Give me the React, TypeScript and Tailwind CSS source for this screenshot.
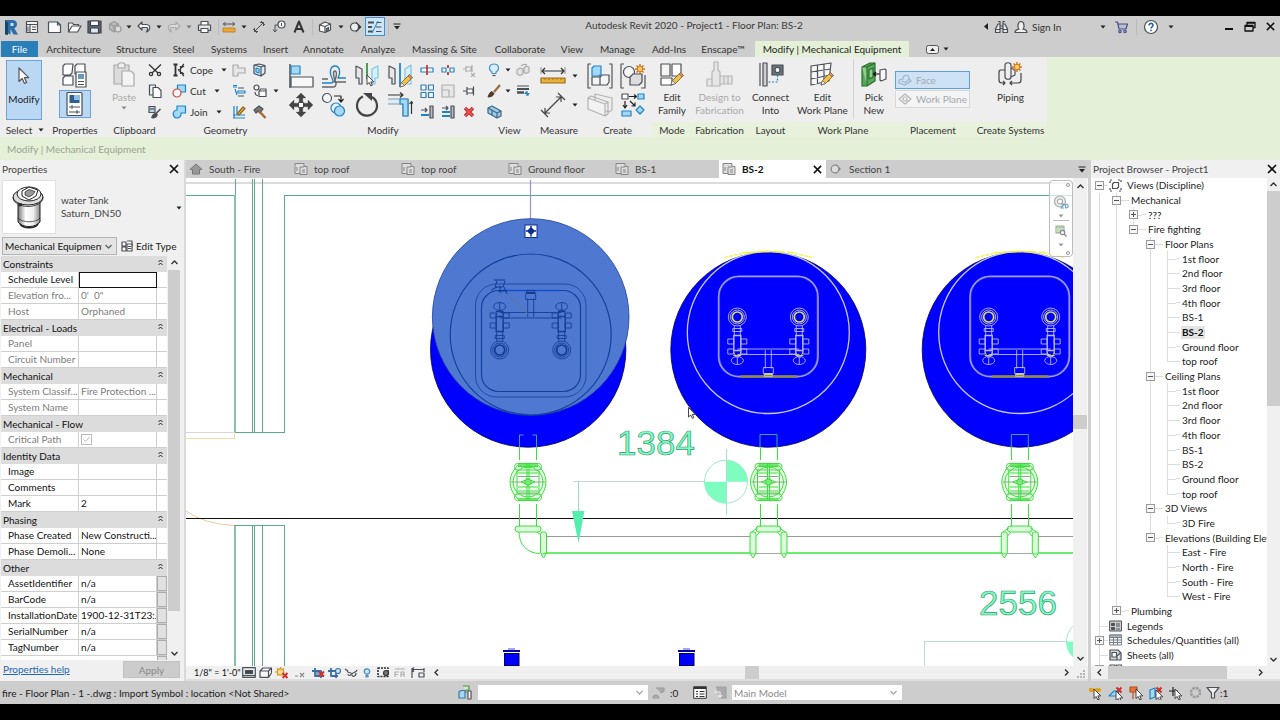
import React, { ReactNode } from "react";

/* ---------- icon helpers ---------- */

const INK = "#4a5058";
const BLUE = "#1e84c6";
const SKY = "#a5d8f6";

type IcoProps = { w?: number; h?: number; s?: string; sw?: number; children: ReactNode };
function Ico({ w = 16, h = 16, s = INK, sw = 1.2, children }: IcoProps) {
  return (
    <svg width={w} height={h} viewBox={`0 0 ${w} ${h}`} fill="none" stroke={s} strokeWidth={sw} strokeLinejoin="round" className="block shrink-0" aria-hidden="true">
      {children}
    </svg>
  );
}

function Caret({ c = "#222" }: { c?: string }) {
  return (
    <svg width="6" height="4" viewBox="0 0 6 4" className="block shrink-0" aria-hidden="true">
      <path d="M.5 .5h5L3 3.5z" fill={c} />
    </svg>
  );
}

function Chevron({ d = "down", c = "#333" }: { d?: "up" | "down" | "left" | "right"; c?: string }) {
  const p = { up: "M1.5 6l3-3 3 3", down: "M1.5 3l3 3 3-3", left: "M6 1.5l-3 3 3 3", right: "M3 1.5l3 3-3 3" }[d];
  return (
    <svg width="9" height="9" viewBox="0 0 9 9" fill="none" stroke={c} strokeWidth="1.4" className="block shrink-0" aria-hidden="true">
      <path d={p} />
    </svg>
  );
}

function Cross({ n = 10 }: { n?: number }) {
  return (
    <svg width={n} height={n} viewBox="0 0 10 10" stroke="#111" strokeWidth="1.7" className="block shrink-0" aria-hidden="true">
      <path d="M1 1l8 8M9 1l-8 8" />
    </svg>
  );
}

const pencil = (
  <g>
    <path d="M13 24l1.500-4.500 8-8 3 3-8 8z" fill="#f2c14b" stroke="#8a6420" strokeWidth=".9" />
    <path d="M13 24l1.500-4.500 3 3z" fill="#fff" stroke="#555" strokeWidth=".7" />
    <path d="M21 13l3 3 1.500-1.500-3-3z" fill="#d98b7a" stroke="#8a6420" strokeWidth=".7" />
  </g>
);

const spark = (x: number, y: number) => (
  <g transform={`translate(${x} ${y})`}>
    <path d="M0-5v10M-5 0h10M-3.500-3.500l7 7M-3.500 3.500l7-7" stroke="#c96f14" strokeWidth="1.400" />
    <circle r="2.600" fill="#ffd76a" stroke="#d9761a" strokeWidth="1" />
  </g>
);

const redX = (x: number, y: number) => (
  <path transform={`translate(${x} ${y})`} d="M-2.500-2.500l5 5M2.500-2.500l-5 5" stroke="#cf2f2a" strokeWidth="2" />
);

const arrowCursor = (x: number, y: number) => (
  <path transform={`translate(${x} ${y})`} d="M0 0v9.500l2.200-2 1.600 3.400 1.500-.700-1.500-3.300h3z" fill="#fff" stroke="#333" strokeWidth=".9" />
);

/* ---------- title bar ---------- */

function Slot({ label, className = "w-5", children }: { label: string; className?: string; children: ReactNode }) {
  return (
    <button type="button" aria-label={label} className={`flex h-5 shrink-0 items-center justify-center ${className}`}>
      {children}
    </button>
  );
}
const Sep = () => <span className="h-4 w-px shrink-0 bg-[#bcbcbc]" />;

function TitleBar() {
  return (
    <header className="flex h-[25px] shrink-0 items-center bg-[#cdcdcd] pb-1">
      <div className="flex w-[408px] shrink-0 items-center">
        <Slot label="Application menu" className="w-[22px]">
          <svg width="14" height="16" viewBox="0 0 14 16" aria-hidden="true">
            <path d="M1 1h7c3.500 0 5 1.700 5 4.300 0 2-1 3.300-2.700 4L14 15.500H9.500L6.500 10v5.500L3 14V4.500L1 3z" fill="#2a6fa8" />
            <path d="M6.500 4h1.700c1 0 1.500.500 1.500 1.400S9.200 7 8.200 7H6.500z" fill="#cfe0ee" />
            <path d="M1 1v14.500l3 .500V4z" fill="#16466f" />
          </svg>
        </Slot>
        <Slot label="Home">
          <Ico w={14} h={14}><rect x="1.500" y="1.500" width="11" height="11" fill="#f2f2f2" /><path d="M1.500 4.500h11M5 4.500v8M7 7h4M7 9.500h4" /><path d="M3 6.500v5" strokeWidth="1" /></Ico>
        </Slot>
        <span className="w-0.5" />
        <Slot label="New"><Ico w={15} h={14}><path d="M1.500 2h9l3 3v7.500h-12z" fill="#fafafa" /><path d="M10.500 2v3h3" /></Ico></Slot>
        <Slot label="Open"><Ico w={15} h={14}><path d="M1.500 12V3h4l1 1.500h5V6" fill="#f4f4f4" /><path d="M1.500 12L5 6h9l-3.500 6z" fill="#fff" /></Ico></Slot>
        <Slot label="Save"><Ico w={15} h={14} s="#3c434c"><rect x="1" y="1" width="13" height="12" fill="#5b6470" /><path d="M3.500 1h8v4.500h-8z" fill="#fff" /><path d="M3.500 8h8v5h-8z" fill="#dfe8ef" /></Ico></Slot>
        <Slot label="Synchronize" className="w-[21px]"><Ico w={14} h={14} s="#9b9b9b"><path d="M1.500 4L6 1.500 10.500 4v5L6 12 1.500 9z" fill="#bbb" /><path d="M1.500 4L6 6l4.500-2M6 6v6" /><circle cx="10" cy="9" r="3" fill="#ddd" /></Ico></Slot>
        <Slot label="Synchronize options" className="w-2"><Caret /></Slot>
        <Slot label="Undo" className="w-[22px]"><Ico w={14} h={12}><path d="M5 1L1 5l4 4V6.500h4.500c1.500 0 1.500 2 0 4.500 4-2 4.500-7 0-7.500H5z" fill="#f5f5f5" /></Ico></Slot>
        <Slot label="Undo options" className="w-2"><Caret /></Slot>
        <Slot label="Redo" className="w-[22px]"><Ico w={14} h={12} s="#ababab"><path d="M9 1l4 4-4 4V6.500H4.500C3 6.500 3 8.500 4.500 11 .500 9 0 4 4.500 3.500H9z" fill="#d8d8d8" /></Ico></Slot>
        <Slot label="Redo options" className="w-2"><Caret c="#777" /></Slot>
        <Slot label="Print" className="w-[22px]"><Ico w={15} h={14}><path d="M4 5V1.500h7V5" fill="#fff" /><path d="M1.500 5h12v5.500h-12z" fill="#e9e9e9" /><path d="M4 8.500h7v4H4z" fill="#fff" /></Ico></Slot>
        <span className="w-[3px]" />
        <Sep />
        <Slot label="Measure"><Ico w={14} h={12}><path d="M1 3h12M3.500 1L1.500 3l2 2M10.500 1l2 2-2 2" strokeWidth="1" /><rect x="1" y="7" width="12" height="4" fill="#e8a93a" stroke="#b9791b" strokeWidth=".8" /></Ico></Slot>
        <Slot label="Measure options" className="w-[10px]"><Caret /></Slot>
        <Slot label="Aligned dimension"><Ico w={14} h={14}><path d="M2.500 11.500l9-9M8 2.500h3.500V6M2.500 8v3.500H6M1 9l4 4M9 1l4 4" strokeWidth="1" /></Ico></Slot>
        <Slot label="Tag by category"><Ico w={14} h={14}><circle cx="9.500" cy="4.500" r="3.500" fill="#f5f5f5" /><path d="M9.500 3v3M6 5H3v6M1 9.500L3 12l2-2.500" strokeWidth="1" /></Ico></Slot>
        <Slot label="Text"><Ico w={12} h={14} sw={2} s="#333"><path d="M1.500 12.500L6 1.500l4.500 11M3 9h6" /></Ico></Slot>
        <span className="w-[3px]" />
        <Sep />
        <Slot label="Default 3D view" className="w-6"><Ico w={14} h={14}><path d="M1.500 5L7 2l5.500 2v6L7 12.500 1.500 11z" fill="#fff" /><path d="M1.500 5L7 6.500l5.500-2.500M7 6.500v6" /><path d="M8.500 8.500l2-1v3l-2 1z" fill="#888" /></Ico></Slot>
        <Slot label="3D options" className="w-2"><Caret /></Slot>
        <Slot label="Section" className="w-5"><Ico w={14} h={14}><path d="M8 1.500L13.500 7 8 12.500z" fill="#333" stroke="none" /><circle cx="6.500" cy="7" r="4" fill="#eee" /></Ico></Slot>
        <span className="flex h-[19px] w-5 shrink-0 items-center justify-center border border-[#3f8fd2] bg-[#cfe5f8]">
          <Ico w={16} h={14} sw={1.500}><path d="M1 2.500h6M1 7h4M1 11.500h5" strokeWidth="2.200" /><path d="M9.500 2.500h5M9 7h5.500M9 11.500h5.500" strokeWidth="1" /><path d="M5 13L11 1" stroke={BLUE} strokeWidth="1" /></Ico>
        </span>
        <span className="w-[3px]" />
        <Sep />
        <Slot label="Customize toolbar" className="w-4"><svg width="8" height="7" viewBox="0 0 8 7" aria-hidden="true"><path d="M.500 1h7" stroke="#222" /><path d="M1 3h6L4 6.500z" fill="#222" /></svg></Slot>
      </div>
      <h1 className="min-w-0 flex-1 truncate pb-1 text-center leading-4 text-[#3a3a3a]">Autodesk Revit 2020 - Project1 - Floor Plan: BS-2</h1>
      <div className="flex w-[300px] shrink-0 items-center">
        <Slot label="Collapse search" className="w-[12px]"><svg width="4" height="7" viewBox="0 0 4 7"><path d="M4 0v7L0 3.500z" fill="#222" /></svg></Slot>
        <Slot label="Search" className="w-[18px]"><Ico w={15} h={14}><path d="M4 1.500h2V4M9 4V1.500h2M6 4L4 4 1.500 9v3.500H6V4zM9 4h2l2.500 5v3.500H9zM6 6h3M6 8.500h3" fill="#e8e8e8" /><path d="M2 9.500h4M9 9.500h4" /></Ico></Slot>
        <Slot label="Account" className="w-[22px]"><Ico w={14} h={14}><path d="M1 12.500c0-2 2-3 4-3.300C3.500 8 3.300 1.500 7 1.500S10.500 8 9 9.200c2 .300 4 1.300 4 3.300z" fill="#eee" /></Ico></Slot>
        <button type="button" className="w-[66px] text-left leading-4 text-[#333]">Sign In</button>
        <Slot label="Account options" className="w-[14px]"><Caret /></Slot>
        <Slot label="App store" className="w-6"><Ico w={15} h={14} s="#46508a"><path d="M1 2h2.500L5 9h7l1.500-5H4" fill="#b8bcd4" /><circle cx="6" cy="11.500" r="1.200" /><circle cx="11" cy="11.500" r="1.200" /></Ico></Slot>
        <span className="w-0.5" />
        <Sep />
        <Slot label="Help" className="w-[28px]"><Ico w={16} h={16}><circle cx="8" cy="8" r="6.500" fill="#fff" /><path d="M6 6.500c0-3 4.300-2.700 4 0-.200 1.400-2 1.500-2 3M8 10.700v1.500" stroke="#2b5fae" strokeWidth="1.600" /></Ico></Slot>
        <Slot label="Help options" className="w-3"><Caret /></Slot>
        <span className="w-[45px]" />
        <Slot label="Minimize" className="w-[18px]"><svg width="8" height="8"><rect y="5" width="8" height="2" fill="#111" /></svg></Slot>
        <Slot label="Restore" className="w-6"><Ico w={12} h={11} s="#111" sw={1.300}><path d="M3 4V1.500h8v5H9M3 2.200h8M1 4.500h8v5.500H1zM1 5.300h8" /></Ico></Slot>
        <Slot label="Close" className="w-[18px]"><Cross n={9} /></Slot>
      </div>
    </header>
  );
}

/* ---------- ribbon tabs ---------- */

const tabs: [string, string][] = [
  ["Architecture", "w-[71px]"], ["Structure", "w-[55px]"], ["Steel", "w-[39px]"], ["Systems", "w-[52px]"],
  ["Insert", "w-[41px]"], ["Annotate", "w-[55px]"], ["Analyze", "w-[54px]"], ["Massing & Site", "w-[79px]"],
  ["Collaborate", "w-[72px]"], ["View", "w-[32px]"], ["Manage", "w-[59px]"], ["Add-Ins", "w-[44px]"], ["Enscape™", "w-[64px]"],
];

function RibbonTabs() {
  return (
    <nav className="flex h-4 shrink-0 bg-[#cdcdcd] pl-px leading-4 text-[#333]">
      <button type="button" className="w-[37px] bg-[#2a7fb8] text-white">File</button>
      {tabs.map(([t, w]) => (
        <button type="button" key={t} className={`${w} shrink-0 whitespace-nowrap`}>{t}</button>
      ))}
      <button type="button" className="w-[154px] shrink-0 whitespace-nowrap bg-[#e5f0d9] text-[#222]">Modify | Mechanical Equipment</button>
      <button type="button" aria-label="Ribbon display" className="flex w-[56px] items-center justify-center gap-1">
        <svg width="13" height="9" viewBox="0 0 13 9"><rect x=".5" y=".5" width="12" height="8" rx="2" fill="#eee" stroke="#555" /><path d="M4 6l2.500-3L9 6z" fill="#222" /></svg>
        <Caret />
      </button>
    </nav>
  );
}

/* ---------- ribbon ---------- */

function Panel({ title, className, green, caret, children }: { title: string; className: string; green?: boolean; caret?: boolean; children: ReactNode }) {
  return (
    <section className={`flex shrink-0 flex-col bg-[#eeeeee] ${className}`}>
      <div className="flex h-[65px] pt-0.5">{children}</div>
      <h2 className={`flex h-[15px] items-center justify-center gap-1.5 whitespace-nowrap leading-4 text-[#333] ${green ? "bg-[#e7f1dc]" : ""}`}>
        {title}
        {caret && <Caret />}
      </h2>
    </section>
  );
}

function Tool({ label, className = "w-[21px] h-[21px]", children }: { label: string; className?: string; children: ReactNode }) {
  return (
    <button type="button" aria-label={label} className={`flex shrink-0 items-center justify-center ${className}`}>{children}</button>
  );
}

function BigTool({ lines, className, dim, children }: { lines: string[]; className: string; dim?: boolean; children: ReactNode }) {
  return (
    <button type="button" className={`flex flex-col items-center pt-0.5 leading-[13px] ${dim ? "text-[#a9a9a9]" : "text-[#333]"} ${className}`}>
      {children}
      <span className="mt-0.5 flex flex-col items-center whitespace-nowrap">
        {lines.map((l) => <span key={l}>{l}</span>)}
      </span>
    </button>
  );
}

const big = "w-[33px] h-[29px]";

function Ribbon() {
  return (
    <div className="flex h-20 shrink-0 bg-[#e5f0d9] shadow-[0_1px_0_#d3dccb]">
      <Panel title="Select" caret className="w-[50px]">
        <button type="button" className="ml-1.5 mt-px flex h-[60px] w-9 flex-col items-center border border-[#6fa3d3] bg-[#bad8f4] leading-4 text-[#222]">
          <span className="mt-1.5"><Ico w={14} h={18}><path d="M2 1v13.500l3.200-3 2.300 5 2.200-1-2.300-4.800h4.300z" fill="#fff" stroke="#555" /></Ico></span>
          <span className="mt-1.5">Modify</span>
        </button>
      </Panel>
      <Panel title="Properties" className="w-[50px]">
        <div className="flex w-full flex-col items-center gap-0.5 pt-0.5">
          <Tool label="Type properties" className="h-[27px] w-8">
            <Ico w={28} h={26}>
              <path d="M2 4l2-2h8l-1 9-2 2H2zM14 4l2-2h8v8l-2 2h-8zM2 16l2-2h8v9H2z" fill="#fdfdfd" />
              <rect x="15" y="10" width="10" height="15" fill="#fff" /><rect x="17" y="12" width="6" height="5" fill="#6b96bd" stroke="none" /><path d="M17 19.500h6M17 22.500h6" />
            </Ico>
          </Tool>
          <Tool label="Properties" className="h-7 w-8 border border-[#6fa3d3] bg-[#bad8f4]">
            <Ico w={20} h={26}>
              <rect x="2" y="1.500" width="15" height="23" rx="1" fill="#fff" /><rect x="4.500" y="4" width="10" height="8" fill="#2d5f8c" stroke="none" /><path d="M9 4h5.500v5H9z" fill="#8fc1e8" stroke="none" />
              <path d="M4 16h11M7 14v4M4 21h11M12 19v4" strokeWidth="1" />
            </Ico>
          </Tool>
        </div>
      </Panel>
      <Panel title="Clipboard" className="w-[69px]">
        <button type="button" className="flex w-[48px] flex-col items-center gap-px pt-0.5 leading-4 text-[#a9a9a9]">
          <Ico w={24} h={27} s="#a9a9a9"><rect x="2" y="4" width="15" height="19" fill="#dcdcdc" /><path d="M6 4c0-3 7-3 7 0v3H6z" fill="#eee" /><path d="M10 10h9l3 3v12H10z" fill="#f4f4f4" /></Ico>
          Paste
          <Caret c="#888" />
        </button>
        <div className="-ml-1 flex flex-col">
          <Tool label="Cut"><Ico w={14} h={14} sw={1.300} s="#333"><path d="M1 1.500l9 8.500M13 1.500L4 10" /><circle cx="3" cy="11" r="1.600" /><circle cx="11" cy="11" r="1.600" /></Ico></Tool>
          <Tool label="Copy"><Ico w={14} h={14}><path d="M1.500 1h6v10h-6z" fill="#f0f0f0" /><path d="M5 3.500h5l3 3v7H5z" fill="#fff" /></Ico></Tool>
          <Tool label="Match type"><Ico w={14} h={14}><path d="M1 1.500h6v6H1z" fill="#bcd3e6" /><path d="M2 4h4" /><path d="M12.500 4L8 8.500M4 12.500c1-3 3-4 4-4s1.500 2 0 3-3 1.200-4 1z" fill="#444" strokeWidth="1.600" /></Ico></Tool>
        </div>
      </Panel>
      <Panel title="Geometry" className="w-[113px]">
        <div className="flex w-[59px] flex-col leading-4 text-[#333]">
          <button type="button" className="flex h-[21px] items-center"><span className="w-[21px] pl-[3px]"><Ico w={15} h={14} s="#333"><path d="M1.500 1.500h4M1.500 12.500h4M3.500 1.500v11" strokeWidth="1.800" /><path d="M6 7l6-4M6 7l6 4M8.500 3v8M12 1c-2 1-1 3-3 3M12 13c-2-1-1-3-3-3" /></Ico></span><span className="mr-2">Cope</span><Caret /></button>
          <button type="button" className="flex h-[21px] items-center"><span className="w-[21px] pl-[3px]"><Ico w={15} h={14} s={BLUE}><rect x="5.500" y="1" width="8" height="7" fill={SKY} /><circle cx="5" cy="9" r="4" fill="#f4f4f4" stroke="#c94a42" /></Ico></span><span className="mr-2">Cut</span><Caret /></button>
          <button type="button" className="flex h-[21px] items-center"><span className="w-[21px] pl-[3px]"><Ico w={15} h={14} s={BLUE}><path d="M5 1h8.500v7H9a4 4 0 1 1-4-3z" fill={SKY} /></Ico></span><span className="mr-2">Join</span><Caret /></button>
        </div>
        <div className="flex flex-col">
          <Tool label="Beam joins"><Ico w={14} h={14} s="#aaa"><path d="M1 2h5v3h7v5H6v3H1z" fill="#e6e6e6" /></Ico></Tool>
          <Tool label="Wall joins"><Ico w={14} h={14}><path d="M1 3h4M1 1.500h4M6 7h7v2H6zM3 5l2 6" stroke={BLUE} /><path d="M6 4h6M6 12h6" /></Ico></Tool>
          <Tool label="Split face"><Ico w={14} h={14}><path d="M2 1v12M5 1v8M1 10h12M1 13h12" stroke={BLUE} /><path d="M5 9l6-7 2 1.500L7 10z" fill="#f2c14b" stroke="#8a6420" /></Ico></Tool>
        </div>
        <div className="flex flex-col">
          <Tool label="Paint"><Ico w={14} h={14}><path d="M1 2l7 2v9L1 10.500zM8 4l4-1.500V10L8 13zM1 2l5-1 6 1.500" fill="#dfeefa" /><path d="M3 5l3 1v4L3 9z" fill={SKY} stroke={BLUE} /></Ico></Tool>
          <Tool label="Wall opening"><Ico w={14} h={14}><circle cx="3.500" cy="3.500" r="2.500" /><path d="M6 7h7v5.500H6zM6 7l1.500-2H13v2M2 8c0 3 1 3.500 3 3.500" fill="#fff" /></Ico></Tool>
          <Tool label="Demolish"><Ico w={14} h={14}><path d="M1 5l5-4 4 3-3 4-2-2-2 2z" fill="#777" /><path d="M6 6l6.500 7" stroke="#a66a3a" strokeWidth="2.500" /></Ico></Tool>
        </div>
        <Tool label="Geometry options" className="mt-[21px] h-[21px] w-3"><Caret /></Tool>
      </Panel>
      <Panel title="Modify" className="w-[202px]">
        <div className="ml-0.5 grid grid-cols-4 content-start gap-y-0 pt-0.5">
          <Tool label="Align" className={big}><Ico w={26} h={26}><path d="M2 1v24" strokeWidth="1.500" /><rect x="3" y="3" width="9" height="8" fill={SKY} stroke={BLUE} /><rect x="3" y="14" width="22" height="10" fill="#f8f8f8" /></Ico></Tool>
          <Tool label="Offset" className={big}><Ico w={26} h={26} sw={1.400}><path d="M1 20h9c3 0 2-3 1-5-3-5-2-12 3-12s6 7 3 12h8" stroke={BLUE} /><path d="M1 24h11c3 0 4-3 2-7-2-5-2-9 0-9s2 6-1 11h12M1 16h6" stroke="#666" /></Ico></Tool>
          <Tool label="Mirror pick axis" className={big}><Ico w={26} h={26}><path d="M2 3l6 3v15H5v-6H2z" fill="#e8e8e8" /><path d="M24 3l-6 3v15h3v-6h3z" fill="#d5effb" stroke="#7cc3e4" /><path d="M13 0v16" stroke="#2f9b3a" strokeWidth="1.800" />{arrowCursor(13, 12)}</Ico></Tool>
          <Tool label="Mirror draw axis" className={big}><Ico w={26} h={26}><path d="M2 3l6 3v15H5v-6H2z" fill="#e8e8e8" /><path d="M24 2l-6 4v15h6z" fill="#d5effb" stroke="#7cc3e4" /><path d="M13 0v24" stroke={BLUE} strokeWidth="1.800" />{pencil}</Ico></Tool>
          <Tool label="Move" className={big}><Ico w={26} h={26} s="#444"><path d="M13 1l5 5h-3.200v4h-3.600V6H8zM13 25l5-5h-3.200v-4h-3.600v4H8zM1 13l5-5v3.200h4v3.600H6V18zM25 13l-5-5v3.200h-4v3.600h4V18z" fill="#444" strokeWidth=".3" /><rect x="10.500" y="10.500" width="5" height="5" fill="#fff" strokeWidth="1" /></Ico></Tool>
          <Tool label="Copy element" className={big}><Ico w={26} h={26}><circle cx="6" cy="6" r="4.500" fill="#f6f6f6" /><path d="M13 4h7v5M17.500 7L20 10l2.500-3" stroke="#222" /><circle cx="15" cy="16" r="5" fill="#e8f5fd" stroke={BLUE} /><circle cx="18.500" cy="19" r="5" fill={SKY} stroke={BLUE} /></Ico></Tool>
          <Tool label="Rotate" className={big}><Ico w={26} h={26} s="#444" sw={2.200}><path d="M9 4.500a10 10 0 1 0 9 .500" /><path d="M9 1h9v8z" fill="#444" stroke="none" /></Ico></Tool>
          <Tool label="Trim corner" className={big}><Ico w={26} h={26}><path d="M1 7h20v17h-5V12H1" fill="#d9eefb" stroke="#8d959c" /><path d="M13 7h8v17h-5V12h-3z" fill={SKY} stroke={BLUE} /><path d="M1 3h15M13 .500l3 2.500-3 2.500M24.500 22V10M22.500 12l2-2.500 2 2.500" stroke="#333" /></Ico></Tool>
        </div>
        <div className="grid grid-cols-3 content-start">
          <Tool label="Split"><Ico w={14} h={12}><rect x="1" y="4" width="12" height="4" fill="#fff" stroke={BLUE} /><path d="M7 1v10" stroke="#c8372f" strokeWidth="1.800" /></Ico></Tool>
          <Tool label="Split with gap"><Ico w={14} h={12}><path d="M1 4h4v4H1zM9 4h4v4H9z" fill="#fff" stroke={BLUE} /><path d="M7 1v3M7 8v3" stroke="#c8372f" strokeWidth="1.800" /></Ico></Tool>
          <Tool label="Unpin"><Ico w={14} h={14} s="#b0b0b0"><path d="M1 6h3M4 3v6M4 4h5v4H4M10 2v7M9 10l4 4M13 10l-4 4" /></Ico></Tool>
          <Tool label="Array"><Ico w={14} h={14} s={BLUE}><path d="M1 1h5v5H1zM8.500 1h5v5h-5zM1 8.500h5v5H1zM8.500 8.500h5v5h-5z" fill="#eaf6fd" stroke="#3c79a6" /></Ico></Tool>
          <Tool label="Scale"><Ico w={14} h={14} s="#b0b0b0"><path d="M1 1h12v12H1zM1 6h7v7" fill="#e8e8e8" /></Ico></Tool>
          <Tool label="Pin"><Ico w={14} h={12}><path d="M1 6h4M5 2v8M5 4h6v4H5M11.500 1.500v9" fill="#fff" /></Ico></Tool>
          <Tool label="Trim single"><Ico w={14} h={14}><path d="M1 5h6M5 3l2 2-2 2" /><path d="M1 10h8" stroke={BLUE} strokeWidth="2" /><path d="M10 1h3v12h-3z" fill="#bbb" /></Ico></Tool>
          <Tool label="Trim multiple"><Ico w={14} h={14}><path d="M1 3h6M5 1l2 2-2 2" /><path d="M1 7h8M1 11h8" stroke={BLUE} strokeWidth="2" /><path d="M10 1h3v12h-3z" fill="#bbb" /></Ico></Tool>
          <Tool label="Delete"><Ico w={12} h={12}><path d="M2 2l8 8M10 2l-8 8" stroke="#c1272d" strokeWidth="3.400" /><path d="M2 2l8 8M10 2l-8 8" stroke="#ee5a56" strokeWidth="1.400" /></Ico></Tool>
        </div>
      </Panel>
      <Panel title="View" className="w-[51px]">
        <div className="grid grid-cols-[20px_8px_22px] content-start">
          <Tool label="Reveal" className="h-[21px] w-5"><Ico w={12} h={14}><path d="M4 9C-.500 6 1.500 1 6 1s6.500 5 2 8v1.500H4z" fill="#d8effd" stroke="#4f90c0" /><path d="M4.500 12.500h3" /></Ico></Tool>
          <Tool label="Reveal options" className="h-[21px] w-2"><Caret /></Tool>
          <Tool label="Displace"><Ico w={14} h={14} s="#adadad"><path d="M1 7l3-2 3 1v5l-3 1.500L1 11zM8 5l2-2 3 1v5l-3 1.500L8 9z" fill="#e2e2e2" /><path d="M5 3c2-2 4-2 6-1" /></Ico></Tool>
          <Tool label="Override graphics" className="h-[21px] w-5"><Ico w={14} h={14}><path d="M13 1L7 8" stroke="#9a6a3a" strokeWidth="2.200" /><path d="M1 13c1-3 2-5 4-5.500l2 2C6.500 12 4 13 1 13z" fill="#5a3a22" stroke="#3c2a1a" strokeWidth=".8" /></Ico></Tool>
          <Tool label="Override options" className="h-[21px] w-2"><Caret /></Tool>
          <Tool label="Linework"><Ico w={14} h={12}><path d="M1 1h12" strokeWidth="1" /><path d="M1 4h12" strokeWidth="2" /><path d="M1 7.500h7" strokeWidth="2.500" /><path d="M11 6v5M8.500 8.500h5M9.200 6.800l3.600 3.600" stroke={BLUE} /></Ico></Tool>
          <Tool label="Selection box" className="h-[21px] w-5"><Ico w={15} h={14}><path d="M1 3l4-2 9 5v5l-4 2-9-5z" fill="#9ccbe8" stroke="#3d6886" /><path d="M1 3l9 5v5M10 8l4-2M5 5v5" stroke="#3d6886" /></Ico></Tool>
        </div>
      </Panel>
      <Panel title="Measure" className="w-[48px]">
        <div className="grid grid-cols-[36px_8px] content-start pt-0.5">
          <Tool label="Measure distance" className="h-[29px] w-9"><Ico w={26} h={22}><path d="M2 6h22M5 3L2 6l3 3M21 3l3 3-3 3" stroke="#333" /><path d="M1 2v7M25 2v7" strokeWidth=".6" /><rect x="1" y="13" width="24" height="5" fill="#e9b03c" stroke="#9a6c1c" /><path d="M5 13v2M9 13v2M13 13v2M17 13v2M21 13v2" stroke="#9a6c1c" strokeWidth=".8" /></Ico></Tool>
          <Tool label="Measure distance options" className="h-[29px] w-2"><Caret /></Tool>
          <Tool label="Dimension" className="h-[29px] w-9"><Ico w={26} h={26}><path d="M5 21L21 5M16 5h5v5M5 16v5h5M1 18l7 7M18 1l7 7" stroke="#444" /></Ico></Tool>
          <Tool label="Dimension options" className="h-[29px] w-2"><Caret /></Tool>
        </div>
      </Panel>
      <Panel title="Create" className="w-[69px]">
        <div className="grid grid-cols-2 content-start pt-0.5">
          <Tool label="Create parts" className={big}><Ico w={26} h={26}><path d="M4 1H1v24h3M22 1h3v24h-3" stroke="#555" /><path d="M5 5l2-2h7v8l-2 2H5z" fill={SKY} stroke={BLUE} /><path d="M5 14h8v8H5zM13 14l2-2h7v7l-2 3h-7z" fill="#f5f5f5" /></Ico></Tool>
          <Tool label="Create group" className={big}><Ico w={28} h={26}><path d="M5 1H2v24h3M22 25h4V12" stroke="#555" /><circle cx="10" cy="9" r="5.500" fill="#f6f6f6" /><path d="M11 14l3-3h9v8l-3 3h-9z" fill="#ddd" />{spark(21, 6)}</Ico></Tool>
          <Tool label="Create assembly" className={big}><Ico w={28} h={26} s="#b2b2b2"><path d="M9 2l17 4v12l-3 2-14-5z" fill="#efefef" /><path d="M2 6l17 6v12L2 17z" fill="#f2f2f2" /><path d="M2 6l3-2 17 6v12l-3 2M19 12l3-2" /></Ico></Tool>
          <Tool label="Create similar" className={big}><Ico w={26} h={26}><path d="M2 2h6v5H2z" fill="#fff" /><path d="M18 2h6v5h-6zM2 19h9v5H2z" fill={SKY} stroke={BLUE} /><path d="M20 14l4 4-4 4-4-4z" fill={SKY} stroke={BLUE} /><path d="M9 4.500h7M14 2.500l2.500 2-2.500 2M5 9v6M3 13l2 3 2-3M10 9l5 5M15 10.500V14h-3.500" stroke="#222" /></Ico></Tool>
        </div>
      </Panel>
      <Panel title="Mode" green className="w-[40px]">
        <BigTool lines={["Edit", "Family"]} className="w-10"><Ico w={28} h={28}><path d="M3 3h9v12H3z" fill="#f4f4f4" /><path d="M14 3h9v12h-9zM3 17h11v7H3z" fill="#fff" />{pencil}</Ico></BigTool>
      </Panel>
      <Panel title="Fabrication" green className="w-[55px]">
        <BigTool dim lines={["Design to", "Fabrication"]} className="w-[55px]"><Ico w={28} h={28} s="#b5b5b5"><path d="M8 1h4v8l2 2v14H6V11l2-2zM14 15h12v8H14M18 15v8M22 15v8M1 18h5v7H1z" fill="#e6e6e6" /></Ico></BigTool>
      </Panel>
      <Panel title="Layout" green className="w-[47px]">
        <BigTool lines={["Connect", "Into"]} className="w-[47px]"><Ico w={28} h={28}><path d="M3 2v23" /><path d="M6 2h4v23H6z" fill="#cfcfcf" /><rect x="15" y="4" width="11" height="10" fill="#6c7178" /><circle cx="20.500" cy="9" r="2.500" fill="#fff" /><path d="M20.500 14v7H10" stroke={BLUE} strokeDasharray="2 1.500" /></Ico></BigTool>
      </Panel>
      <Panel title="Work Plane" green className="w-[98px]">
        <BigTool lines={["Edit", "Work Plane"]} className="w-[58px]"><Ico w={28} h={28}><path d="M3 5l20-3-2 18L3 24zM9.500 4v19M16 3v18M3 11l19.500-3M3 18l19-4" fill="#f6f6f6" />{pencil}</Ico></BigTool>
        <span className="ml-0.5 h-[60px] w-px bg-[#d2d2d2]" />
        <BigTool lines={["Pick", "New"]} className="ml-0.5 w-[37px]"><Ico w={28} h={28}><path d="M2 6l8-4h5v18l-8 5H2z" fill="#58a85a" stroke="#2b6e30" /><path d="M2 6h5v19M7 6l8-4M9 9l4-2v9l-4 2z" fill="#8fd08c" stroke="#2b6e30" /><path d="M14 13h6M16 11l-2.500 2L16 15" stroke="#111" /><path d="M20 9l5-1 1 1v9l-5 2-1-1z" fill="#f8f8f8" /></Ico></BigTool>
      </Panel>
      <Panel title="Placement" green className="w-[82px]">
        <div className="ml-[3px] mt-3 flex w-[75px] flex-col gap-px leading-4 text-[#a3a9ae]">
          <button type="button" className="flex h-[18px] items-center gap-1 border border-[#5d9fd6] bg-[#cde2f5] pl-0.5"><Ico w={14} h={12} s="#9fb3c5"><path d="M1 6l4-1c0-5 6-5 6 0l2 2-6 4-6-2z" /><path d="M4 7c3 2 5 1 7-2" /></Ico>Face</button>
          <button type="button" className="flex h-[18px] items-center gap-1 whitespace-nowrap border border-[#d8d8d8] bg-[#f4f4f4] pl-0.5"><Ico w={14} h={12} s="#b5b5b5"><path d="M7 1l6 5-6 5-6-5z" /><circle cx="7" cy="6" r="2" /></Ico>Work Plane</button>
        </div>
      </Panel>
      <Panel title="Create Systems" green className="w-[73px]">
        <BigTool lines={["Piping"]} className="w-full"><Ico w={28} h={28}><path d="M8 4c0-3 6-3 6 0v12c0 3-6 3-6 0zM14 7l4 2v5l-4 2" fill="#eee" /><path d="M8 9H4c-2 0-2 1-2 3v7c0 2 1 3 3 3h3M6 20l2 2-2 2M24 12v7c0 2-1 3-3 3h-8M15 20l-2 2 2 2" stroke="#444" />{spark(20, 6)}</Ico></BigTool>
      </Panel>
    </div>
  );
}

/* ---------- properties palette ---------- */

type Row = { n: string; v?: string; dim?: boolean; head?: boolean; btn?: boolean; check?: boolean; sel?: boolean };
const rows: Row[] = [
  { n: "Constraints", head: true }, { n: "Schedule Level", sel: true }, { n: "Elevation fro...", v: "0'  0\"", dim: true }, { n: "Host", v: "Orphaned", dim: true },
  { n: "Electrical - Loads", head: true }, { n: "Panel", dim: true }, { n: "Circuit Number", dim: true },
  { n: "Mechanical", head: true }, { n: "System Classif...", v: "Fire Protection ...", dim: true }, { n: "System Name", dim: true },
  { n: "Mechanical - Flow", head: true }, { n: "Critical Path", check: true, dim: true },
  { n: "Identity Data", head: true }, { n: "Image" }, { n: "Comments" }, { n: "Mark", v: "2" },
  { n: "Phasing", head: true }, { n: "Phase Created", v: "New Constructi..." }, { n: "Phase Demoli...", v: "None" },
  { n: "Other", head: true }, { n: "AssetIdentifier", v: "n/a", btn: true }, { n: "BarCode", v: "n/a", btn: true },
  { n: "InstallationDate", v: "1900-12-31T23:...", btn: true }, { n: "SerialNumber", v: "n/a", btn: true }, { n: "TagNumber", v: "n/a", btn: true },
];

function PropRow({ r }: { r: Row }) {
  if (r.head)
    return (
      <tr className="h-4 bg-[#dcdcdc]">
        <th colSpan={3} className="p-0 pl-0.5 text-left font-normal text-[#111]">
          <span className="flex items-center justify-between pr-1">
            {r.n}
            <svg width="5" height="7" viewBox="0 0 5 7" fill="none" stroke="#222" className="mb-1"><path d="M.5 3l2-2 2 2M.5 6l2-2 2 2" /></svg>
          </span>
        </th>
      </tr>
    );
  return (
    <tr className={`h-4 ${r.dim ? "text-[#7d7d7d]" : "text-[#111]"}`}>
      <td className="overflow-hidden whitespace-nowrap border-b border-r border-[#cfcfcf] p-0 pl-[7px]">{r.n}</td>
      <td className={r.sel ? "whitespace-pre border border-[#111] p-0" : "overflow-hidden whitespace-pre border-b border-r border-[#cfcfcf] p-0 pl-0.5"}>
        {r.check ? (
          <label className="flex h-[15px] items-center">
            <input type="checkbox" checked readOnly aria-label="Critical Path" className="peer sr-only" />
            <svg width="11" height="11" viewBox="0 0 11 11" fill="#fff" stroke="#bbb"><rect x=".5" y=".5" width="10" height="10" /><path d="M2.500 5.500l2 2 4-4.500" fill="none" /></svg>
          </label>
        ) : r.v}
      </td>
      <td className="border-b border-[#cfcfcf] p-0">
        {r.btn && <button type="button" aria-label={`Edit ${r.n}`} className="block h-[15px] w-full border border-[#adadad] bg-[#e1e1e1]" />}
      </td>
    </tr>
  );
}

function Properties() {
  return (
    <aside className="flex w-[184px] shrink-0 flex-col bg-[#f0f0f0]">
      <div className="flex h-[18px] shrink-0 items-center justify-between px-0.5 text-[#444]">
        <h2 className="leading-4">Properties</h2>
        <button type="button" aria-label="Close properties" className="pr-[3px]"><Cross /></button>
      </div>
      <div className="mx-0.5 flex h-[58px] shrink-0 items-center">
        <div className="flex h-[54px] w-[54px] items-center justify-center border border-[#e0e0e0] bg-white">
          <svg width="40" height="46" viewBox="0 0 40 46" fill="none" stroke="#222" aria-hidden="true">
            <defs><linearGradient id="tank" x1="0" x2="1"><stop offset="0" stopColor="#777" /><stop offset=".35" stopColor="#fff" /><stop offset=".7" stopColor="#eee" /><stop offset="1" stopColor="#888" /></linearGradient></defs>
            <path d="M9 14v24c4 6 18 6 22 0V14z" fill="url(#tank)" />
            <path d="M9 34c4 5 18 5 22 0" strokeWidth=".7" /><path d="M11 40c3 5 15 5 18 0" strokeWidth="1.500" />
            <ellipse cx="19" cy="13" rx="15" ry="8" fill="#ddd" />
            <path d="M4 13c0 3 1 4 2 5 6 6 20 6 26 0 1-1 2-2 2-5" strokeWidth=".8" />
            <ellipse cx="20" cy="10" rx="12" ry="7" fill="#f7f7f7" />
            <path d="M13 7l7-4 9 3-2 6-7 4-7-4z" fill="#fff" /><path d="M16 8l4-2.500 6 2-2 3-4 2.500-4-2z" fill="#999" strokeWidth=".7" />
            <path d="M10 22l3-2" strokeWidth="2" />
          </svg>
        </div>
        <div className="flex-1 pl-[5px] leading-[13px] text-[#444]">water Tank<br />Saturn_DN50</div>
        <button type="button" aria-label="Change type" className="pt-0.5"><Caret /></button>
      </div>
      <div className="flex h-5 shrink-0 items-center pl-0.5">
        <label className="relative flex items-center">
          <select aria-label="Category filter" className="h-[18px] w-[115px] appearance-none border border-[#b4b4b4] bg-[#e4e4e4] pl-0.5 pr-3 leading-4 text-[#111]"><option>Mechanical Equipment (1)</option></select>
          <span className="pointer-events-none absolute right-0.5 bg-[#e4e4e4] px-0.5"><Chevron c="#666" /></span>
        </label>
        <button type="button" className="ml-1 flex items-center gap-[3px] whitespace-nowrap text-[#222]">
          <Ico w={12} h={12}><path d="M1 2h4v4H1zM6 1h5v5H6M1 7h4v4H1z" fill="#fff" /><rect x="6" y="4" width="5" height="7" fill="#fff" /><path d="M7 6.500h3M7 8.500h3" /></Ico>
          Edit Type
        </button>
      </div>
      <div className="flex min-h-0 flex-1 pl-px">
        <div className="w-[166px] overflow-hidden bg-white">
          <table className="w-full table-fixed border-separate border-spacing-0 leading-[15px]">
            <colgroup><col className="w-[78px]" /><col className="w-[78px]" /><col className="w-[10px]" /></colgroup>
            <tbody>{rows.map((r) => <PropRow key={r.n} r={r} />)}</tbody>
          </table>
          <div className="ml-[156px] h-1 border border-b-0 border-[#adadad] bg-[#e1e1e1]" />
        </div>
        <div className="flex w-[14px] flex-col items-center bg-[#f0f0f0]">
          <span className="flex h-[14px] items-center pb-px"><Chevron d="up" /></span>
          <span className="w-3 flex-[341] bg-[#cdcdcd]" />
          <span className="flex-[35]" />
          <span className="flex h-[14px] items-center"><Chevron /></span>
        </div>
      </div>
      <div className="flex h-[21px] shrink-0 items-center justify-between pl-[3px] pr-1">
        <a href="#help" className="pb-1 leading-4 text-[#2467b4] underline">Properties help</a>
        <button type="button" className="mb-0.5 h-[17px] w-[57px] border border-[#c2c2c2] bg-[#cccccc] leading-4 text-[#8a8a8a]">Apply</button>
      </div>
    </aside>
  );
}

/* ---------- drawing ---------- */

function Fittings({ line, ring }: { line: string; ring: string }) {
  return (
    <g fill="none" stroke={line} strokeWidth=".9">
      <path d="M-31 15.500h62M-31 21h62M-3 16.500V35M3 16.500V35" />
      <path d="M-5 34H5v6H-5zM-4 40h8v3h-8z" />
      <path d="M-4 41h8" stroke={ring} strokeWidth="1.400" />
      {[-31, 31].map((x) => (
        <g key={x} transform={`translate(${x} 0)`}>
          <circle cy="-16.500" r="9" /><circle cy="-16.500" r="5" stroke={ring} strokeWidth="1.700" /><circle cy="-16.500" r="7" />
          <path d="M-3-8v10M3-8v10M-4.500-5h9v3h-9z" />
          <path d="M-3.500 2h7v15h-7z" strokeWidth="1.400" />
          <path d="M-9.500 5.500h6v5h-6zM3.500 5.500h6v5h-6zM-9.500 15.500h6v5h-6zM3.500 15.500h6v5h-6z" />
          <path d="M-4 18l3 6M4 18l-3 6M-4 22h8" stroke={ring} />
          <ellipse cy="27" rx="6" ry="4" /><path d="M0 23v8" />
        </g>
      ))}
    </g>
  );
}

function Valve() {
  return (
    <g fill="none" stroke="#3be03b" strokeWidth="1">
      <path d="M-8.500-34.500V-22M8.500-34.500V-22M-8.500 21.500V45M8.500 21.500V45" shapeRendering="crispEdges" />
      <path d="M-10-17q-8 8-8 17t8 17h20q8-8 8-17t-8-17z" fill="#d2f8d2" fillOpacity=".6" />
      <circle r="15" fill="#fff" fillOpacity=".5" />
      <rect x="-13.500" y="-18.500" width="27" height="6.500" rx="3" /><rect x="-13.500" y="12" width="27" height="6.500" rx="3" />
      <path d="M-10-15.500h20M-10-9h20M-10 5h20M-10 9h20M-11-12v24M11-12v24M-10-17h20M-10 17h20" />
      <path d="M-10-5.500h20M-10 11h20M-17 0h34" stroke="#8a9a8a" strokeWidth=".9" />
      <path d="M-1-18v36M1-18v36" /><path d="M-7 0L0-3 7 0 0 3z" /><circle r="3" fill="#7ee87e" />
    </g>
  );
}

function Tee() {
  return (
    <g fill="#c4f7c4" fillOpacity=".6" stroke="#3be03b">
      <rect x="-12.500" y="44" width="25" height="6" rx="3" />
      <rect x="-18.500" y="50" width="6" height="22" rx="2" /><rect x="12.500" y="50" width="6" height="22" rx="2" />
      <path d="M-18 72l2.500 4 2.500-4M13 72l2.500 4 2.500-4M-17 50l6-4M17 50l-6-4M-12 54l3-4M12 54l-3-4" fill="none" />
    </g>
  );
}

function Tank({ x }: { x: number }) {
  return (
    <g transform={`translate(${x} 333.500)`}>
      <circle cy="16.200" r="97.500" fill="#0000ff" stroke="#000050" strokeWidth=".8" />
      <circle cy="-1" r="81" fill="none" stroke="#c9c9df" strokeWidth="1.300" />
      <path d="M-44-76l18-4M26-80l18 4" fill="none" stroke="#f4f45a" strokeWidth="1.500" strokeDasharray="4 1" />
      <path d="M-26-80.500Q0-83.500 26-80.500" fill="none" stroke="#f0f03c" strokeWidth="1.500" strokeDasharray="13 2" />
      <rect x="-49.500" y="-57" width="99" height="100" rx="20" fill="none" stroke="#9a9af0" strokeWidth="2" />
      <rect x="-48.500" y="-56" width="97" height="98" rx="19" fill="none" stroke="#2626c8" strokeWidth=".6" />
      <path d="M-28 43h57" stroke="#8f8c3a" strokeWidth="2.500" />
      <Fittings line="#b9b9f4" ring="#dcdc50" />
    </g>
  );
}

function CanvasDrawing() {
  const wall = "#5da98c";
  return (
    <svg className="absolute inset-0 h-full w-full" viewBox="186 178 887 488" preserveAspectRatio="xMinYMin slice" role="img" aria-label="Floor plan BS-2">
      <g shapeRendering="crispEdges" fill="none" stroke={wall}>
        <path d="M186 183h900" stroke="#dcdcdc" strokeWidth="2" />
        <path d="M186 195.500h49M284.500 195.500H1090" stroke="#55b090" />
        <path d="M235.500 179v17M252.500 179v253M254.500 179v253M262.500 179v253M284.500 195v237M235 432.500h50" />
        <path d="M235 195v237M235 525v142" strokeWidth="2" stroke="#86c2aa" />
        <path d="M252.500 525v142M254.500 525v142M262.500 525v142M284.500 525v142M234 525.500h51" />
        <path d="M186 432.500h48" stroke="#d6d6d6" />
        <path d="M186 438h48.500v-6" stroke="#f5d9a0" />
      </g>
      <path d="M186 511q18 13 48 14.500" fill="none" stroke="#f3c79a" />
      <path d="M530.500 180v39" stroke="#9a8fd0" strokeWidth="1.200" />

      <circle cx="528.200" cy="349.500" r="97.700" fill="#0000ff" stroke="#000050" strokeWidth=".8" />
      <circle cx="530.700" cy="317" r="98.300" fill="#4f79d0" stroke="#1d3f9c" strokeWidth=".8" />
      <g fill="none" stroke="#12409f">
        <circle cx="530.700" cy="334.500" r="80.500" strokeWidth="1.200" />
        <rect x="475.500" y="284" width="110.500" height="113" rx="21" strokeWidth=".8" />
        <rect x="481.500" y="290.500" width="99" height="101" rx="17" strokeWidth="1.200" />
      </g>
      <path d="M500 290.500h60" stroke="#0f4fd0" strokeWidth="1.500" />
      <g transform="translate(530.700 333.500) scale(1 -1)"><Fittings line="#143f99" ring="#123a90" /></g>
      <path d="M494 280h11M497 281l-2 6h8l2-6M491 290l6-3M498 291h9M500 286v7M504 287l3 7" fill="none" stroke="#123a90" />
      <path d="M507 294l21 20" stroke="#6c7486" strokeWidth=".9" />
      <rect x="525" y="225" width="12" height="12.500" fill="#fff" stroke="#0b2f8c" />
      <path d="M531 226v10.500M526 231h10M528 231l3-3 3 3-3 3z" stroke="#0b2f8c" strokeWidth="1.600" fill="#0b2f8c" />

      <Tank x={768.300} />
      <Tank x={1019.700} />

      <path d="M186 518.500h900" stroke="#111" shapeRendering="crispEdges" />
      <path d="M546 536.500h204M787 536.500h215M1038 536.500h50" stroke="#9a9a9a" shapeRendering="crispEdges" />
      <path d="M544 553h206M787 553h215M1038 553h50" stroke="#6cec6c" strokeWidth="2" shapeRendering="crispEdges" />
      <path d="M755 553.500h26M1007 553.500h26" stroke="#9ab09a" shapeRendering="crispEdges" />

      <g transform="translate(528 482)">
        <Valve />
        <g fill="#c4f7c4" fillOpacity=".6" stroke="#3be03b">
          <rect x="-13" y="44" width="26" height="6" rx="3" /><rect x="12.500" y="50" width="6" height="22" rx="2" />
          <path d="M13 72l2.500 4 2.500-4M9 50l4 3M-9 50c0 12 8 21.500 21 21.500" fill="none" />
        </g>
      </g>
      <g transform="translate(768.500 482)"><Valve /><Tee /><path d="M-8.500-34.500v-13h17v13" stroke="#3f9fb0" fill="none" /></g>
      <g transform="translate(1019.800 482)"><Valve /><Tee /><path d="M-8.500-34.500v-13h17v13" stroke="#3f9fb0" fill="none" /></g>
      <path d="M519.500 447.500v-12.500h4M536.500 447.500v-12.500h-4" stroke="#3f9fb0" fill="none" />

      <path d="M573 481.500h131" stroke="#c3d6ce" shapeRendering="crispEdges" />
      <path d="M578.500 482v30" stroke="#8fe3c0" />
      <path d="M572 511h12.500l-6 32z" fill="#56eeb0" />
      <circle cx="726" cy="481.700" r="21.500" fill="#fff" stroke="#9fe8ca" />
      <path d="M726 481.700v-21.500a21.500 21.500 0 0 1 21.500 21.500zM726 481.700v21.500a21.500 21.500 0 0 1-21.500-21.500z" fill="#7dfdc0" />
      <path d="M726.500 449v66" stroke="#9fe8ca" />
      <g fontFamily="'Liberation Sans', Arial, sans-serif" fontSize="35" fill="#7dfbc0" stroke="#3c9a78" strokeWidth=".7">
        <text x="617" y="455">1384</text>
        <text x="979" y="615">2556</text>
      </g>
      <path d="M924.500 667v-25.500H1068" fill="none" stroke="#b9dccd" shapeRendering="crispEdges" />
      <circle cx="1088" cy="641.500" r="21.500" fill="#fff" stroke="#9fe8ca" />
      <path d="M1088 641.500v21.500a21.500 21.500 0 0 1-21.500-21.500z" fill="#7dfdc0" />
      {[503, 678].map((x) => (
        <g key={x} transform={`translate(${x} 0)`}>
          <path d="M5 649h7" stroke="#8888dd" strokeWidth="1.500" />
          <path d="M0 651h17" stroke="#0000a8" strokeWidth="2" />
          <rect x="1.500" y="653.500" width="14.500" height="12" fill="#0000ff" stroke="#000050" />
        </g>
      ))}
      {arrowCursor(688.5, 407.5)}
    </svg>
  );
}

/* ---------- document area ---------- */

const SheetIcon = () => (
  <Ico w={14} h={12} s="#858585" sw={1}><path d="M1 .500h9v3h3v8H6v-1H1zM6 11V4h4" fill="#dedede" /><path d="M3 4v4M8 7h3M8 9h3" /></Ico>
);
const views: [string, string][] = [["South - Fire", "home"], ["top roof", "plan"], ["top roof", "plan"], ["Ground floor", "plan"], ["BS-1", "plan"], ["BS-2", "active"], ["Section 1", "section"]];

function ViewTabs() {
  return (
    <nav className="flex h-[18px] shrink-0 items-center bg-[#cdcdcd] leading-4 text-[#444]">
      {views.map(([t, k], i) => (
        <button
          type="button"
          key={i}
          className={`flex h-full shrink-0 items-center gap-1.5 pl-[3px] ${i === 0 ? "w-[105px]" : "w-[107px]"} ${k === "active" ? "bg-white font-bold text-[#111]" : ""}`}
        >
          {k === "home" ? (
            <Ico w={14} h={12} s="#777" sw={1}><path d="M1 6.500L7 1l6 5.500h-2.500V11h-7V6.500z" fill="#999" /></Ico>
          ) : k === "section" ? (
            <Ico w={14} h={12} s="#888"><path d="M7 1l5 5-5 5z" fill="#888" stroke="none" /><circle cx="6" cy="6" r="3.800" fill="#ddd" /></Ico>
          ) : <SheetIcon />}
          <span className="whitespace-nowrap">{t}</span>
          {k === "active" && <span className="ml-auto pr-1"><Cross n={9} /></span>}
        </button>
      ))}
      <span className="flex-1" />
      <button type="button" aria-label="Tab list" className="flex w-3 justify-center"><svg width="8" height="7" viewBox="0 0 8 7"><path d="M.500 1h7" stroke="#222" /><path d="M1 3h6L4 6.500z" fill="#222" /></svg></button>
    </nav>
  );
}

function ViewControls() {
  return (
    <div className="flex w-[258px] shrink-0 items-center">
      <span className="w-[61px] whitespace-nowrap pl-2 text-[9px] leading-3 text-[#111]">1/8" = 1'-0"</span>
      <Tool label="Detail level" className="w-4"><Ico w={14} h={11}><rect x=".7" y=".7" width="12.600" height="9.600" fill="#eee" /><rect x="3.500" y="3.500" width="7" height="3" fill="#444" /><path d="M1 8.500h12" /></Ico></Tool>
      <Tool label="Visual style" className="w-[17px]"><Ico w={13} h={11}><path d="M1 4l3-3h8.500v5l-3 4.300H1zM1 4h8.500v6M9.500 4l3-3" fill="#f8f8f8" /></Ico></Tool>
      <Tool label="Sun path" className="w-4"><Ico w={14} h={12}><circle cx="5.500" cy="5" r="3.200" fill="#ffe08a" stroke="#d79a26" /><path d="M5.500 0v1.500M0 5h2M2 1.500l1 1M9 1.500l-1 1M2 8.500l1-1" stroke="#d79a26" />{redX(10, 8.5)}</Ico></Tool>
      <Tool label="Shadows" className="w-5"><Ico w={12} h={12} s="#888"><path d="M1 9h3M6 6l4 4M10 6l-4 4" /></Ico></Tool>
      <Tool label="Crop view" className="w-4"><Ico w={14} h={12}><path d="M4 1v8h9M1 4h9v7" stroke="#3a70a5" strokeWidth="1.800" /><path d="M5 5h4v3H5z" fill="#7ba7ce" stroke="none" />{redX(10.500, 7)}</Ico></Tool>
      <Tool label="Crop region" className="w-4"><Ico w={14} h={12}><path d="M4 1v8h7M1 4h8v7" stroke="#3a70a5" strokeWidth="1.800" /><circle cx="11" cy="4" r="2.500" fill="#cfe8fa" stroke="#3a70a5" /></Ico></Tool>
      <Tool label="Temporary hide" className="w-[17px]"><Ico w={14} h={10}><path d="M1 1l3 2M13 2c-1 3-4 2-5 4-1-3-4 1-5-4M4 6c0 2 3 2 3 0M8 7c0 2 4 2 4-2" /></Ico></Tool>
      <Tool label="Reveal hidden" className="w-4"><Ico w={8} h={10} s="#4688b5"><circle cx="4" cy="3.500" r="2.700" fill="#c9e9fb" /><path d="M3 7.500h2v1.500H3z" /></Ico></Tool>
      <Tool label="Temporary view" className="w-[17px]"><Ico w={13} h={11} s="#333"><rect x="1" y="1" width="10" height="8.500" strokeDasharray="2 1" strokeWidth="1.600" /><circle cx="9" cy="6" r="2.500" fill="#777" /></Ico></Tool>
      <Tool label="Analytical model" className="w-4"><Ico w={12} h={11} s="#b0b0b0"><path d="M1 2h10M1 10V5h4M1 7.500h3M7 10V5h3v5M7 7.500h3" /></Ico></Tool>
      <Tool label="Constraints" className="w-[20px]"><Ico w={14} h={12}><path d="M1 1v10M1 2.500h12M13 1v4M3 .500L1 2.500l2 2M8 6h5v4H8z" /></Ico></Tool>
      <Tool label="Scroll left" className="w-4"><Chevron d="left" /></Tool>
    </div>
  );
}

function DocumentArea() {
  return (
    <main className="flex min-w-0 flex-1 flex-col border-l-2 border-[#d9d9d9]">
      <ViewTabs />
      <div className="flex min-h-0 flex-1">
        <div className="relative min-w-0 flex-1 overflow-hidden bg-white">
          <CanvasDrawing />
          <div className="absolute right-0 top-0.5 flex h-[77px] w-6 flex-col items-center rounded border border-[#bdbdbd] bg-white/70">
            <span className="mr-0.5 mt-0.5 h-1 w-1 self-end rounded-full border border-[#999]" />
            <button type="button" aria-label="Steering wheel" className="mt-2"><Ico w={16} h={15} s="#aaa"><circle cx="7" cy="6.500" r="5.500" fill="#eee" /><circle cx="7" cy="6.500" r="2.500" fill="#fff" /><path d="M8 9h3l-3 4h3M12.500 9v4c4 0 3-4 0-4" stroke="#6aa2c8" /></Ico></button>
            <span className="mt-1"><Caret c="#999" /></span>
            <span className="mt-0.5 h-px w-4 bg-[#bbb]" />
            <button type="button" aria-label="Zoom region" className="mt-1"><Ico w={12} h={12} s="#9cb694"><path d="M1 1h8v7H1z" fill="#b5cdaa" /><path d="M1 4h8M1 6h8" stroke="#fff" strokeWidth=".6" /><circle cx="7.500" cy="7.500" r="2.200" fill="#fff" stroke="#888" /><path d="M9 9l2.500 2.500" stroke="#888" /></Ico></button>
            <span className="mt-1.5"><Caret c="#999" /></span>
            <span className="mb-px mr-0.5 mt-auto h-1 w-1 self-end rounded-full border border-[#999]" />
          </div>
        </div>
        <div className="flex w-[15px] shrink-0 flex-col items-center border-r border-[#fafafa] bg-[#f0f0f0]">
          <span className="flex h-4 items-center"><Chevron d="up" /></span>
          <span className="flex-[221]" />
          <span className="h-[14px] w-full bg-[#cdcdcd]" />
          <span className="flex-[221]" />
          <span className="flex h-4 items-center"><Chevron /></span>
        </div>
      </div>
      <div className="flex h-[13px] shrink-0 bg-[#f0f0f0]">
        <ViewControls />
        <div className="flex flex-1 items-center">
          <span className="flex-[300]" />
          <span className="h-full w-[14px] bg-[#cdcdcd]" />
          <span className="flex-[302]" />
          <Chevron d="right" />
        </div>
        <svg width="17" height="13" viewBox="0 0 17 13" fill="#b4b4b4" className="shrink-0"><path d="M12 4h2v2h-2zM9 7h2v2H9zM12 7h2v2h-2zM6 10h2v2H6zM9 10h2v2H9zM12 10h2v2h-2z" /></svg>
      </div>
      <div className="h-0.5 shrink-0 bg-[#dedede]" />
    </main>
  );
}

/* ---------- project browser ---------- */

type Node = { t: string; d: number; x?: "+" | "-"; i?: "views" | "legend" | "table" | "sheet" | "family"; on?: boolean };
const leaf = (t: string, on = false): Node => ({ t, d: 4, on });
const tree: Node[] = [
  { t: "Views (Discipline)", d: 0, x: "-", i: "views" },
  { t: "Mechanical", d: 1, x: "-" },
  { t: "???", d: 2, x: "+" },
  { t: "Fire fighting", d: 2, x: "-" },
  { t: "Floor Plans", d: 3, x: "-" },
  leaf("1st floor"), leaf("2nd floor"), leaf("3rd floor"), leaf("4th floor"), leaf("BS-1"), leaf("BS-2", true), leaf("Ground floor"), leaf("top roof"),
  { t: "Ceiling Plans", d: 3, x: "-" },
  leaf("1st floor"), leaf("2nd floor"), leaf("3rd floor"), leaf("4th floor"), leaf("BS-1"), leaf("BS-2"), leaf("Ground floor"), leaf("top roof"),
  { t: "3D Views", d: 3, x: "-" },
  leaf("3D Fire"),
  { t: "Elevations (Building Elevation)", d: 3, x: "-" },
  leaf("East - Fire"), leaf("North - Fire"), leaf("South - Fire"), leaf("West - Fire"),
  { t: "Plumbing", d: 1, x: "+" },
  { t: "Legends", d: 0, i: "legend" },
  { t: "Schedules/Quantities (all)", d: 0, x: "+", i: "table" },
  { t: "Sheets (all)", d: 0, i: "sheet" },
  { t: "Families", d: 0, x: "+", i: "family" },
];

/* True when a later sibling at this depth keeps the guide line going. */
function guideOn(row: number, depth: number) {
  for (let k = row + 1; k < tree.length; k++) {
    if (tree[k].d < depth) return false;
    if (tree[k].d === depth) return true;
  }
  return false;
}

function NodeIcon({ k }: { k: NonNullable<Node["i"]> }) {
  if (k === "views") return <Ico w={13} h={13}><path d="M1 4V1h3M9 1h3v3M1 9v3h3M12 9v3H9" strokeDasharray="2 1" /><path d="M3.500 5l1.500-1.500h4.500V8L8 9.500H3.500z" fill="#fff" /></Ico>;
  if (k === "legend") return <Ico w={13} h={12} sw={1}><rect x=".6" y="1" width="12" height="10" fill="#ccc" /><path d="M2.500 3.500h3v2h-3zM2.500 7.500h3v2h-3z" fill="#555" /><path d="M7 4h4M7 6h4M7 9h4" /></Ico>;
  if (k === "table") return <Ico w={13} h={12} sw={1} s="#7a8088"><rect x=".6" y="1" width="12" height="10" fill="#f6f6f6" /><path d="M.6 1h12v2.500H.6z" fill="#a8b4c2" /><path d="M4.500 3v8M8.500 3v8M1 6h12M1 8.500h12" /></Ico>;
  if (k === "sheet") return <Ico w={13} h={12}><path d="M1 1h8l3 3v7H1z" fill="#d4d8dc" /><path d="M3 3.500h4.500V8H3zM8 11V7l3.500-3" fill="#fff" /></Ico>;
  return <Ico w={13} h={12}><path d="M1 1h5v4H1zM7.500 1h5v4h-5zM1 7h5v4H1zM7.500 7h5v4h-5z" fill="#fff" /></Ico>;
}

function TreeRow({ n, i }: { n: Node; i: number }) {
  return (
    <li className="flex min-h-0 items-center whitespace-nowrap">
      {Array.from({ length: n.d }, (_, d) => (
        <span key={d} className="flex w-[17px] shrink-0 justify-center self-stretch">
          {guideOn(i, d) && <span className="w-px bg-[#dcdcdc]" />}
        </span>
      ))}
      <span className="relative flex w-[17px] shrink-0 items-center justify-center self-stretch">
        {i > 0 && <span className={`absolute left-2 top-0 w-px bg-[#dcdcdc] ${guideOn(i, n.d) ? "bottom-0" : "bottom-1/2"}`} />}
        <span className="absolute left-2 right-0 top-1/2 h-px bg-[#dcdcdc]" />
        {n.x && (
          <button type="button" aria-label={`Toggle ${n.t}`} className="relative">
            <svg width="9" height="9" viewBox="0 0 9 9" fill="#f6f6f6" stroke="#9a9a9a" className="block"><rect x=".5" y=".5" width="8" height="8" /><path d={n.x === "+" ? "M2 4.500h5M4.500 2v5" : "M2 4.500h5"} stroke="#555" /></svg>
          </button>
        )}
      </span>
      {n.i ? <span className="ml-px mr-1"><NodeIcon k={n.i} /></span> : <span className="mr-px h-px w-1 bg-[#dcdcdc]" />}
      <span className={n.on ? "bg-[#e4e4e4] px-px font-bold leading-[13px] text-[#111]" : "px-px text-[#222]"}>{n.t}</span>
    </li>
  );
}

function ProjectBrowser() {
  return (
    <aside className="flex w-[192px] shrink-0 flex-col border-l-[3px] border-[#cfcfcf] bg-[#f0f0f0]">
      <div className="flex h-[18px] shrink-0 items-center justify-between pl-0.5 pr-[3px] text-[#444]">
        <h2 className="leading-4">Project Browser - Project1</h2>
        <button type="button" aria-label="Close browser"><Cross /></button>
      </div>
      <div className="flex min-h-0 flex-1">
        <div className="min-w-0 flex-1 overflow-hidden bg-white">
          <ul className="grid h-[499px] auto-rows-fr leading-[14px]">
            {tree.map((n, i) => <TreeRow key={i} n={n} i={i} />)}
          </ul>
        </div>
        <div className="flex w-[13px] shrink-0 flex-col items-center bg-[#f0f0f0]">
          <span className="flex h-[13px] items-center"><Chevron d="up" /></span>
          <span className="w-full flex-[215] bg-[#cdcdcd]" />
          <span className="flex-[247]" />
          <span className="flex h-[13px] items-center"><Chevron /></span>
        </div>
      </div>
      <div className="flex h-[13px] shrink-0 items-center pl-1">
        <span className="w-[13px]"><Chevron d="left" /></span>
        <span className="h-full w-[119px] bg-[#cdcdcd]" />
        <span className="flex-1" />
        <span className="w-6"><Chevron d="right" /></span>
      </div>
      <div className="h-0.5 shrink-0 bg-[#dedede]" />
    </aside>
  );
}

/* ---------- status bar ---------- */

function StatusBar() {
  return (
    <footer className="flex h-[23px] shrink-0 items-center bg-[#cdcdcd] leading-4 text-[#222]">
      <span className="w-[456px] shrink-0 pl-0.5">fire - Floor Plan - 1 -.dwg : Import Symbol : location &lt;Not Shared&gt;</span>
      <span className="w-[22px] pl-0.5"><Ico w={15} h={15}><path d="M5 1h6v4H8v3" fill="#cfe8c4" stroke="#5a8a50" /><path d="M1 7l2-1.500h4V13H1z" fill={SKY} stroke="#3a7aa8" /><path d="M10 6h3v8h-3z" fill="#fff" /></Ico></span>
      <label className="relative flex items-center">
        <select aria-label="Workset" className="h-[15px] w-[170px] appearance-none bg-white" />
        <span className="pointer-events-none absolute right-1"><Chevron c="#aaa" /></span>
      </label>
      <span className="flex w-[22px] justify-center"><Ico w={14} h={14} s="#9c9c9c"><path d="M4 2h8v3L9 7M1 12c0-2 1-3 3-3s2 1 3 3z" fill="#aaa" /></Ico></span>
      <span className="w-[22px]">:0</span>
      <Tool label="Design options" className="w-4"><Ico w={14} h={13} s="#333"><rect x=".7" y=".7" width="12.600" height="11.600" fill="#fff" strokeWidth="1" /><path d="M1 2h12" strokeWidth="2" /><path d="M3 5.500h2M3 8h2M3 10.500h2M6.500 5.500h5M6.500 8h5M6.500 10.500h5" strokeWidth="1" /></Ico></Tool>
      <Tool label="Add to set" className="w-6"><Ico w={14} h={13} s="#a2a2a2"><path d="M3 1h10v11H6" fill="#aaa" /><path d="M1 6h6v5M5 9l2 2.500L9 9" stroke="#eee" /></Ico></Tool>
      <label className="relative flex items-center">
        <select aria-label="Active design option" className="h-[15px] w-[170px] appearance-none bg-white pl-0.5 leading-4 text-[#8a8a8a]"><option>Main Model</option></select>
        <span className="pointer-events-none absolute right-1"><Chevron c="#aaa" /></span>
      </label>
      <span className="flex-1" />
      <div className="flex w-[195px] shrink-0 items-center">
        <Tool label="Select links" className="w-5"><Ico w={15} h={14}><path d="M1 4h12M3 2v4M10 2v4" stroke="#e0a21c" strokeWidth="3" />{arrowCursor(6, 3)}</Ico></Tool>
        <Tool label="Select underlay" className="w-5"><Ico w={15} h={14}><path d="M1 10h8l2-5H6z" fill={SKY} stroke={BLUE} />{redX(11, 4)}{arrowCursor(8, 5)}</Ico></Tool>
        <Tool label="Select pinned" className="w-5"><Ico w={15} h={14}><path d="M2 1h7v5H2zM5 6v7" fill="#e8743a" stroke="#b5501c" />{arrowCursor(8, 3)}</Ico></Tool>
        <Tool label="Select by face" className="w-5"><Ico w={15} h={14}><path d="M2 4l5-2v9l-5 2z" fill={SKY} stroke={BLUE} />{redX(11, 4)}{arrowCursor(8, 4)}</Ico></Tool>
        <Tool label="Drag elements" className="w-5"><Ico w={15} h={14} s="#222"><path d="M5 1v9M1 5h9" />{arrowCursor(7, 3)}</Ico></Tool>
        <Tool label="Background processes" className="w-5"><Ico w={13} h={13} s="#9a9a9a"><circle cx="6.500" cy="6.500" r="4.500" strokeWidth="2.500" strokeDasharray="2.500 1" /></Ico></Tool>
        <button type="button" className="flex items-center pl-px"><Ico w={14} h={13}><path d="M1 1.500h12L8.500 7v5h-3V7z" fill="#eee" /></Ico>:1</button>
      </div>
    </footer>
  );
}

export default function App() {
  return (
    <div className="flex h-screen w-full flex-col overflow-hidden bg-black py-4 font-['Lato','Open_Sans',sans-serif] text-[10px]">
      <TitleBar />
      <RibbonTabs />
      <Ribbon />
      <div className="flex h-[23px] shrink-0 items-center bg-[#e5f0d9] pl-[7px] leading-4 text-[#9aa394]">Modify | Mechanical Equipment</div>
      <div className="flex min-h-0 flex-1 bg-[#f0f0f0]">
        <Properties />
        <DocumentArea />
        <ProjectBrowser />
      </div>
      <StatusBar />
    </div>
  );
}
